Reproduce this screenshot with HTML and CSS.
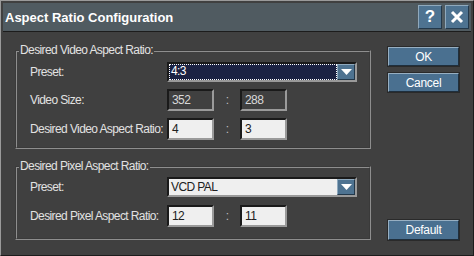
FILE: index.html
```html
<!DOCTYPE html>
<html lang="en">
<head>
    <meta charset="UTF-8">
    <title>Aspect Ratio Configuration</title>
    <link rel="stylesheet" href="styles.css">
</head>
<body>
    <div class="dialog">
        <div class="titlebar">
            <span class="title">Aspect Ratio Configuration</span>
            <div class="title-buttons">
                <button class="tb-btn tb-help">?</button>
                <button class="tb-btn tb-close">
                    <svg width="14" height="14" viewBox="0 0 14 14">
                        <path d="M2 2 L12 12 M12 2 L2 12" stroke="#ffffff" stroke-width="3" fill="none"/>
                    </svg>
                </button>
            </div>
        </div>

        <div class="main">
            <div class="groups">
                <!-- video aspect ratio -->
                <fieldset class="group group-video">
                    <legend>Desired Video Aspect Ratio:</legend>
                    <div class="row row-combo">
                        <label>Preset:</label>
                        <div class="combo combo-focus">
                            <span class="combo-value"><span class="focus-box">4:3</span></span>
                            <span class="combo-arrow">
                                <svg width="11" height="7" viewBox="0 0 11 7"><path d="M0 0 H11 L5.5 6 Z" fill="#ffffff"/></svg>
                            </span>
                        </div>
                    </div>
                    <div class="row">
                        <label>Video Size:</label>
                        <div class="field field-readonly">352</div>
                        <span class="sep">:</span>
                        <div class="field field-readonly">288</div>
                    </div>
                    <div class="row">
                        <label>Desired Video Aspect Ratio:</label>
                        <div class="field">4</div>
                        <span class="sep">:</span>
                        <div class="field">3</div>
                    </div>
                </fieldset>

                <!-- pixel aspect ratio -->
                <fieldset class="group group-pixel">
                    <legend>Desired Pixel Aspect Ratio:</legend>
                    <div class="row row-combo">
                        <label>Preset:</label>
                        <div class="combo">
                            <span class="combo-value">VCD PAL</span>
                            <span class="combo-arrow">
                                <svg width="11" height="7" viewBox="0 0 11 7"><path d="M0 0 H11 L5.5 6 Z" fill="#ffffff"/></svg>
                            </span>
                        </div>
                    </div>
                    <div class="row">
                        <label>Desired Pixel Aspect Ratio:</label>
                        <div class="field">12</div>
                        <span class="sep">:</span>
                        <div class="field">11</div>
                    </div>
                </fieldset>
            </div>

            <div class="buttons">
                <button class="btn btn-ok">OK</button>
                <button class="btn btn-cancel">Cancel</button>
                <button class="btn btn-default">Default</button>
            </div>
        </div>
    </div>
</body>
</html>
```

FILE: styles.css
```css
* {
    box-sizing: border-box;
}

body {
    margin: 0;
    background-color: #404040;
    font-family: "Liberation Sans", Arial, sans-serif;
    font-size: 12px;
    letter-spacing: -0.6px;
    color: #e2e2e2;
}

/* Window frame */
.dialog {
    width: 474px;
    height: 256px;
    padding: 2px 2px 0 2px;
    background-color: #404040;
    border-top: 1px solid #9a9a9a;
    border-left: 1px solid #9a9a9a;
    border-right: 1px solid #1c1c1c;
    border-bottom: 1px solid #1c1c1c;
}

.titlebar {
    height: 29px;
    display: flex;
    align-items: center;
    justify-content: space-between;
    padding: 0 2px;
    background-color: #505b61;
    border-bottom: 1px solid #1c1c1c;
}

.title {
    font-weight: bold;
    font-size: 13px;
    letter-spacing: 0;
    color: #ffffff;
}

.title-buttons {
    display: flex;
    gap: 3px;
}

.tb-btn {
    width: 24px;
    height: 24px;
    padding: 0;
    display: flex;
    align-items: center;
    justify-content: center;
    background-color: #4e7391;
    border: 1px solid;
    border-color: #8fa9bd #23384a #23384a #8fa9bd;
    color: #ffffff;
    font-family: "Liberation Sans", Arial, sans-serif;
    font-weight: bold;
    font-size: 17px;
}

/* Content */
.main {
    display: flex;
    padding: 11px 0 0 12px;
}

.groups {
    width: 356px;
}

.group {
    margin: 0;
    border: 2px groove #8e8e8e;
    padding: 4px 10px 7px 13px;
}

.group legend {
    margin-left: -11px;
    padding: 0 1px;
    line-height: 15px;
    white-space: nowrap;
}

.group-pixel {
    margin-top: 10px;
    padding-top: 3px;
    padding-bottom: 11px;
}

.row {
    display: flex;
    align-items: center;
    height: 22px;
    margin-top: 7px;
}

.group-pixel .row {
    margin-top: 8px;
}

.row-combo,
.group-pixel .row-combo {
    height: 20px;
    margin-top: 0;
}

.row label {
    width: 137px;
    white-space: nowrap;
}

.sep {
    width: 26px;
    text-align: center;
    color: #bdbdbd;
}

.field {
    width: 47px;
    height: 22px;
    padding: 1px 0 0 3px;
    line-height: 16px;
    background-color: #efefef;
    color: #202020;
    border: 2px solid;
    border-color: #1a1a1a #9a9a9a #9a9a9a #1a1a1a;
}

.field-readonly {
    background-color: #404040;
    color: #d8d8d8;
}

/* Combo box */
.combo {
    width: 190px;
    height: 20px;
    display: flex;
    background-color: #efefef;
    color: #202020;
    border: 2px solid;
    border-color: #1a1a1a #9a9a9a #9a9a9a #1a1a1a;
}

.combo-value {
    flex: 1;
    padding: 0 0 0 2px;
    line-height: 16px;
}

.combo-focus .combo-value {
    padding: 1px;
    background-color: #1b2243;
    color: #ffffff;
}

.focus-box {
    display: block;
    height: 14px;
    line-height: 13px;
    padding-left: 1px;
    outline: 1px dotted #ffffff;
}

.combo-arrow {
    width: 18px;
    display: flex;
    align-items: center;
    justify-content: center;
    background-color: #4e7391;
    border: 1px solid;
    border-color: #8fa9bd #23384a #23384a #8fa9bd;
}

/* Dialog buttons */
.buttons {
    display: flex;
    flex-direction: column;
    width: 71px;
    margin: 4px 0 0 17px;
}

.btn {
    height: 19px;
    padding: 0;
    background-color: #4a7090;
    border: 1px solid;
    border-color: #97afc2 #1f2f3d #1f2f3d #97afc2;
    box-shadow: 0 0 0 1px #2a2a2a;
    color: #ffffff;
    font-family: inherit;
    font-size: 12px;
    letter-spacing: -0.3px;
}

.btn-cancel {
    margin-top: 7px;
}

.btn-default {
    height: 20px;
    margin-top: 128px;
}
```
